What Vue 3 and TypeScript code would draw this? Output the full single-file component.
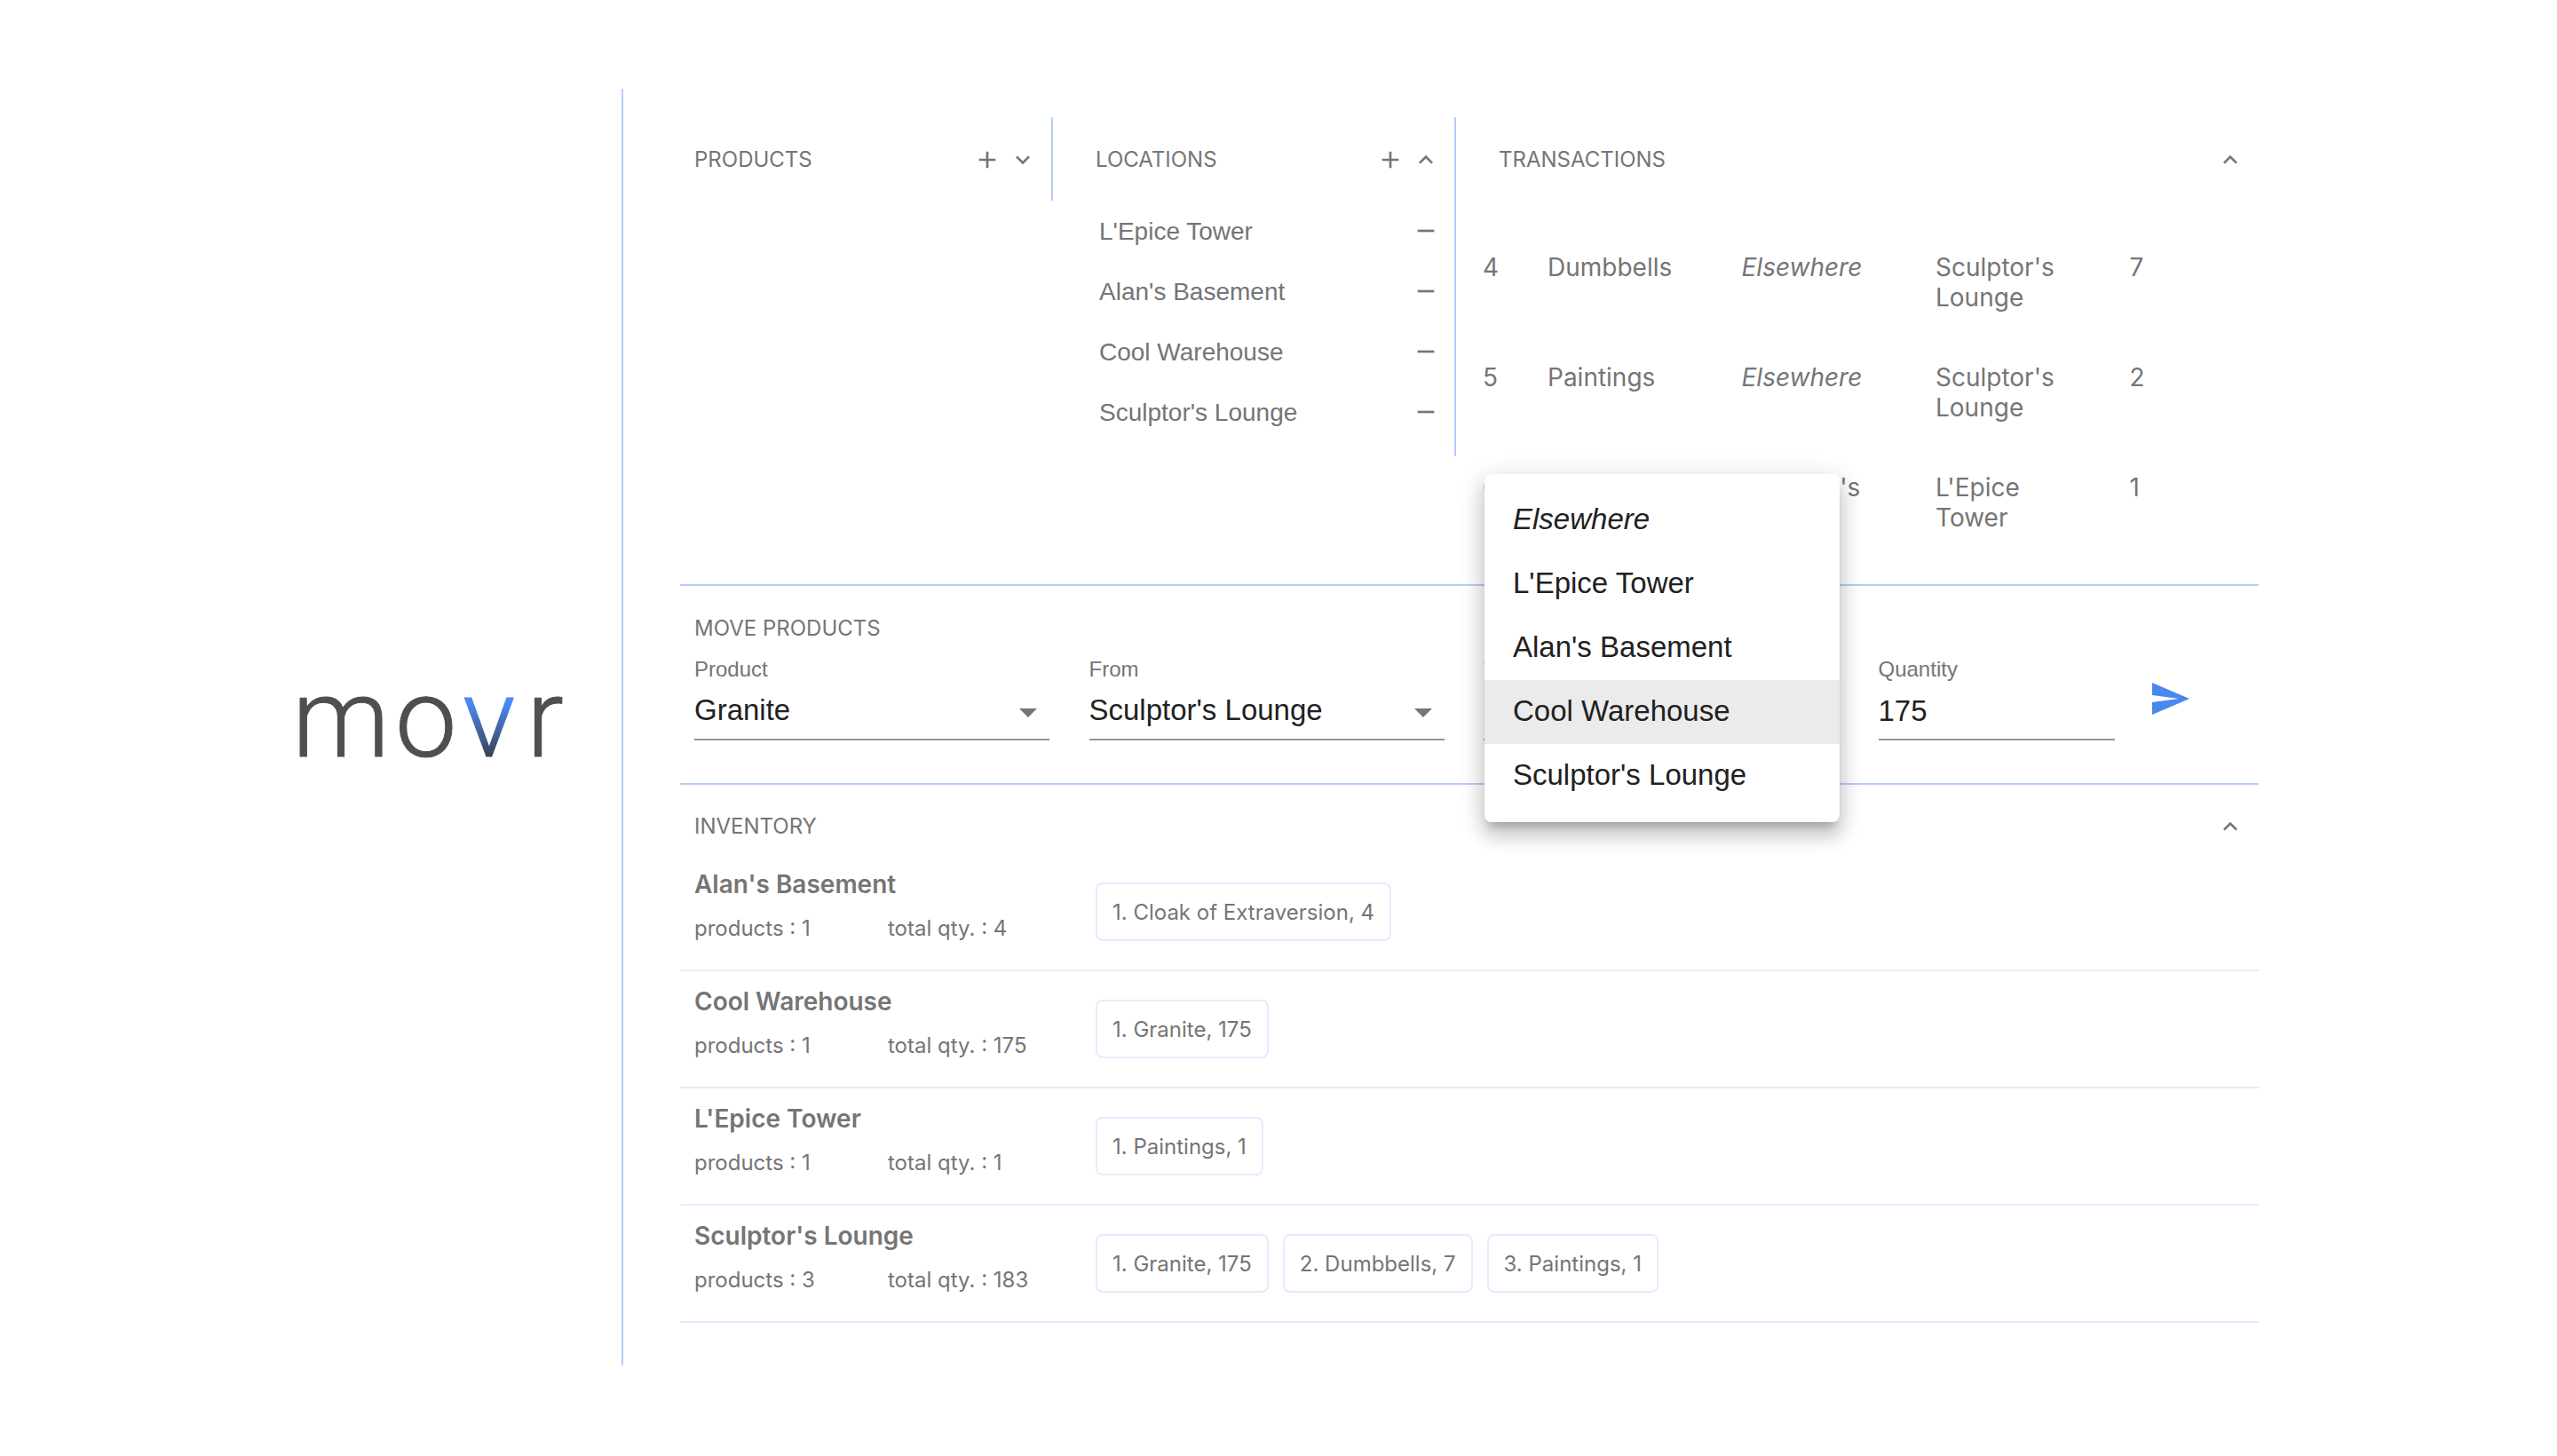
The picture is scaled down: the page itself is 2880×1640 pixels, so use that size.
<script setup lang="ts">
import { ref } from 'vue'

interface Transaction {
  id: number
  product: string
  from: string | null
  to: string
  qty: number
}

interface Stock {
  name: string
  products: number
  total: number
  items: string[]
}

const ICONS = {
  add: 'M19 13h-6v6h-2v-6H5v-2h6V5h2v6h6v2z',
  remove: 'M19 13H5v-2h14v2z',
  more: 'M16.59 8.59L12 13.17 7.41 8.59 6 10l6 6 6-6z',
  less: 'M12 8l-6 6 1.41 1.41L12 10.83l4.59 4.58L18 14z',
  drop: 'M7 10l5 5 5-5z',
  send: 'M2.01 21L23 12 2.01 3 2 10l15 2-15 2z',
}

const products = ['Granite', 'Dumbbells', 'Paintings', 'Cloak of Extraversion']
const locations = ["L'Epice Tower", "Alan's Basement", 'Cool Warehouse', "Sculptor's Lounge"]

const transactions: Transaction[] = [
  { id: 4, product: 'Dumbbells', from: null, to: "Sculptor's Lounge", qty: 7 },
  { id: 5, product: 'Paintings', from: null, to: "Sculptor's Lounge", qty: 2 },
  { id: 6, product: 'Paintings', from: "Sculptor's Lounge", to: "L'Epice Tower", qty: 1 },
]

const inventory: Stock[] = [
  { name: "Alan's Basement", products: 1, total: 4, items: ['Cloak of Extraversion, 4'] },
  { name: 'Cool Warehouse', products: 1, total: 175, items: ['Granite, 175'] },
  { name: "L'Epice Tower", products: 1, total: 1, items: ['Paintings, 1'] },
  { name: "Sculptor's Lounge", products: 3, total: 183, items: ['Granite, 175', 'Dumbbells, 7', 'Paintings, 1'] },
]

const product = ref('Granite')
const from = ref("Sculptor's Lounge")
const to = ref('Cool Warehouse')
const quantity = ref('175')
const menuOpen = ref(true)

function pick(place: string) {
  to.value = place
  menuOpen.value = false
}
</script>

<template>
  <div class="shell">
    <aside class="brand">
      <svg class="logo" viewBox="0 0 298 70" role="img" aria-label="movr">
        <defs>
          <linearGradient id="fade" gradientUnits="userSpaceOnUse" x1="0" y1="0" x2="0" y2="68">
            <stop offset="0.1" stop-color="#4a8af4" />
            <stop offset="1" stop-color="#3a4252" />
          </linearGradient>
        </defs>
        <text y="68" x="-7 109 185 257">mo<tspan fill="url(#fade)" stroke="url(#fade)">v</tspan>r</text>
      </svg>
    </aside>

    <main class="content">
      <div class="top">
        <section class="column">
          <header class="bar">
            <h2>PRODUCTS</h2>
            <button class="icon" aria-label="Add product"><svg viewBox="0 0 24 24"><path :d="ICONS.add" /></svg></button>
            <button class="icon" aria-label="Show products"><svg viewBox="0 0 24 24"><path :d="ICONS.more" /></svg></button>
          </header>
        </section>

        <section class="column">
          <header class="bar inset">
            <h2>LOCATIONS</h2>
            <button class="icon" aria-label="Add location"><svg viewBox="0 0 24 24"><path :d="ICONS.add" /></svg></button>
            <button class="icon" aria-label="Hide locations"><svg viewBox="0 0 24 24"><path :d="ICONS.less" /></svg></button>
          </header>
          <ul class="places">
            <li v-for="place in locations" :key="place">
              <button class="place">{{ place }}</button>
              <button class="icon" :aria-label="`Remove ${place}`"><svg viewBox="0 0 24 24"><path :d="ICONS.remove" /></svg></button>
            </li>
          </ul>
        </section>

        <section class="column wide">
          <header class="bar inset">
            <h2>TRANSACTIONS</h2>
            <button class="icon" aria-label="Hide transactions"><svg viewBox="0 0 24 24"><path :d="ICONS.less" /></svg></button>
          </header>
          <table class="log">
            <colgroup><col class="narrow" /><col class="third" /><col class="third" /><col class="third" /><col /></colgroup>
            <tbody>
              <tr v-for="t in transactions" :key="t.id">
                <td>{{ t.id }}</td>
                <td>{{ t.product }}</td>
                <td><em v-if="!t.from">Elsewhere</em><template v-else>{{ t.from }}</template></td>
                <td>{{ t.to }}</td>
                <td>{{ t.qty }}</td>
              </tr>
            </tbody>
          </table>
        </section>
      </div>

      <section class="move">
        <h2>MOVE PRODUCTS</h2>
        <form class="fields" @submit.prevent>
          <div class="field">
            <label for="product">Product</label>
            <div class="control">
              <select id="product" v-model="product">
                <option v-for="p in products" :key="p">{{ p }}</option>
              </select>
              <svg class="arrow" viewBox="0 0 24 24"><path :d="ICONS.drop" /></svg>
            </div>
          </div>
          <div class="field">
            <label for="from">From</label>
            <div class="control">
              <select id="from" v-model="from">
                <option v-for="l in locations" :key="l">{{ l }}</option>
              </select>
              <svg class="arrow" viewBox="0 0 24 24"><path :d="ICONS.drop" /></svg>
            </div>
          </div>
          <div class="field">
            <label for="to">To</label>
            <div class="control">
              <select id="to" v-model="to">
                <option v-for="l in locations" :key="l">{{ l }}</option>
              </select>
              <svg class="arrow" viewBox="0 0 24 24"><path :d="ICONS.drop" /></svg>
            </div>
            <div v-if="menuOpen" class="menu" role="listbox" aria-label="To">
              <button type="button" role="option" :aria-selected="false" @click="pick('')"><em>Elsewhere</em></button>
              <button
                v-for="l in locations"
                :key="l"
                type="button"
                role="option"
                :aria-selected="l === to"
                :class="{ selected: l === to }"
                @click="pick(l)"
              >{{ l }}</button>
            </div>
          </div>
          <div class="field">
            <label for="quantity">Quantity</label>
            <div class="control">
              <input id="quantity" v-model="quantity" type="text" inputmode="numeric" />
            </div>
          </div>
          <button class="send" aria-label="Move"><svg viewBox="0 0 24 24"><path :d="ICONS.send" /></svg></button>
        </form>
      </section>

      <section class="inventory">
        <header class="bar">
          <h2>INVENTORY</h2>
          <button class="icon" aria-label="Hide inventory"><svg viewBox="0 0 24 24"><path :d="ICONS.less" /></svg></button>
        </header>
        <article v-for="s in inventory" :key="s.name" class="stock">
          <div class="summary">
            <h3>{{ s.name }}</h3>
            <span>products : {{ s.products }}</span>
            <span>total qty. : {{ s.total }}</span>
          </div>
          <ul class="chips">
            <li v-for="(item, i) in s.items" :key="item">{{ i + 1 }}. {{ item }}</li>
          </ul>
        </article>
      </section>
    </main>
  </div>
</template>

<style>
body {
  margin: 0;
  background: #fff;
}
</style>

<style scoped>
* {
  box-sizing: border-box;
}

.shell {
  display: flex;
  padding: 100px 336px;
  color: #757575;
  font-family: Inter, "Noto Sans", sans-serif;
  font-size: 24px;
  line-height: 32px;
}

h2,
h3,
ul {
  margin: 0;
  padding: 0;
}

ul {
  list-style: none;
}

h2 {
  flex: 1;
  font-size: 24px;
  font-weight: 400;
}

button {
  padding: 0;
  border: 0;
  background: none;
  color: inherit;
  font: 400 28px/40px "Liberation Sans", sans-serif;
  text-align: left;
  cursor: pointer;
}

svg {
  display: block;
  fill: currentColor;
}

.brand {
  flex: 0 0 366px;
  display: flex;
  align-items: center;
  border-right: 2px solid #b7cdf9;
}

.logo {
  width: 298px;
  height: 70px;
  overflow: visible;
  fill: #4f4f4f;
  stroke: #4f4f4f;
  stroke-width: 1px;
  stroke-linejoin: round;
  font-family: Roboto, sans-serif;
  font-size: 124px;
  font-weight: 300;
}

.content {
  flex: 1;
  min-width: 0;
  padding: 32px 0 48px 64px;
}

.top {
  display: grid;
  grid-template-columns: 420fr 454fr 904fr;
  align-items: start;
}

.column {
  border-right: 2px solid #b7cdf9;
}

.column.wide {
  border-right: 0;
  padding-bottom: 30px;
}

.bar {
  display: flex;
  gap: 8px;
  padding: 32px 16px 30px;
}

.bar.inset {
  padding-left: 48px;
}

.icon,
.icon svg {
  width: 32px;
  height: 32px;
}

.places {
  padding: 0 16px 16px 52px;
}

.places li {
  display: flex;
  align-items: center;
  justify-content: space-between;
  height: 68px;
}

.place {
  padding-top: 2px;
}

.log {
  width: calc(100% - 30px);
  margin: 30px 0 0 30px;
  border-collapse: collapse;
  table-layout: fixed;
  font-size: 28px;
  line-height: 34px;
}

.log .narrow {
  width: 73px;
}

.log .third {
  width: 25%;
}

.log td {
  padding: 28px 64px 28px 0;
  vertical-align: top;
}

.log td:first-child {
  padding-right: 0;
}

.move {
  padding: 32px 0 48px 16px;
  border: solid #b7cdf9;
  border-width: 2px 0;
}

.fields {
  display: grid;
  grid-template-columns: 3fr 3fr 3fr 2fr 1fr;
  align-items: center;
  margin: 16px -16px 0 0;
}

.field {
  position: relative;
  width: 90%;
  font-family: "Liberation Sans", sans-serif;
}

.field label {
  display: block;
  line-height: 28px;
}

.control {
  position: relative;
  border-bottom: 2px solid #949494;
}

.control select,
.control input {
  display: block;
  width: 100%;
  height: 64px;
  padding: 0;
  border: 0;
  background: none;
  color: #212121;
  font: 33px "Liberation Sans", sans-serif;
  appearance: none;
  outline: 0;
}

.control select {
  padding-bottom: 2px;
}

.control input {
  padding-top: 2px;
}

.arrow {
  position: absolute;
  top: 10px;
  right: 0;
  width: 48px;
  height: 48px;
  pointer-events: none;
}

.menu {
  position: absolute;
  left: 1px;
  bottom: -92px;
  z-index: 2;
  display: flex;
  flex-direction: column;
  width: 100%;
  padding: 16px 0;
  border-radius: 8px;
  background: #fff;
  box-shadow:
    0 10px 10px -6px rgba(0, 0, 0, 0.2),
    0 16px 20px 2px rgba(0, 0, 0, 0.14),
    0 6px 28px 4px rgba(0, 0, 0, 0.12);
}

.menu button {
  height: 72px;
  padding: 0 32px 2px;
  color: #212121;
  font-size: 33px;
}

.menu .selected {
  background: #ebebeb;
}

.send {
  justify-self: start;
  margin-left: 8px;
  color: #4a87ee;
}

.send svg {
  width: 48px;
  height: 48px;
}

.inventory .bar {
  padding: 31px 16px 15px;
}

.stock {
  display: flex;
  align-items: center;
  height: 132px;
  border-bottom: 2px solid #e3ecfd;
}

.summary {
  flex: 0 0 468px;
  align-self: flex-start;
  display: grid;
  grid-template-columns: 218px 1fr;
  row-gap: 18px;
  padding: 18px 0 0 16px;
}

.summary h3 {
  grid-column: 1 / -1;
  font-size: 28px;
  font-weight: 600;
}

.chips {
  display: flex;
  flex-wrap: wrap;
  gap: 16px;
}

.chips li {
  padding: 16px 17px 14px;
  border: 2px solid #e3ecfd;
  border-radius: 8px;
}
</style>
